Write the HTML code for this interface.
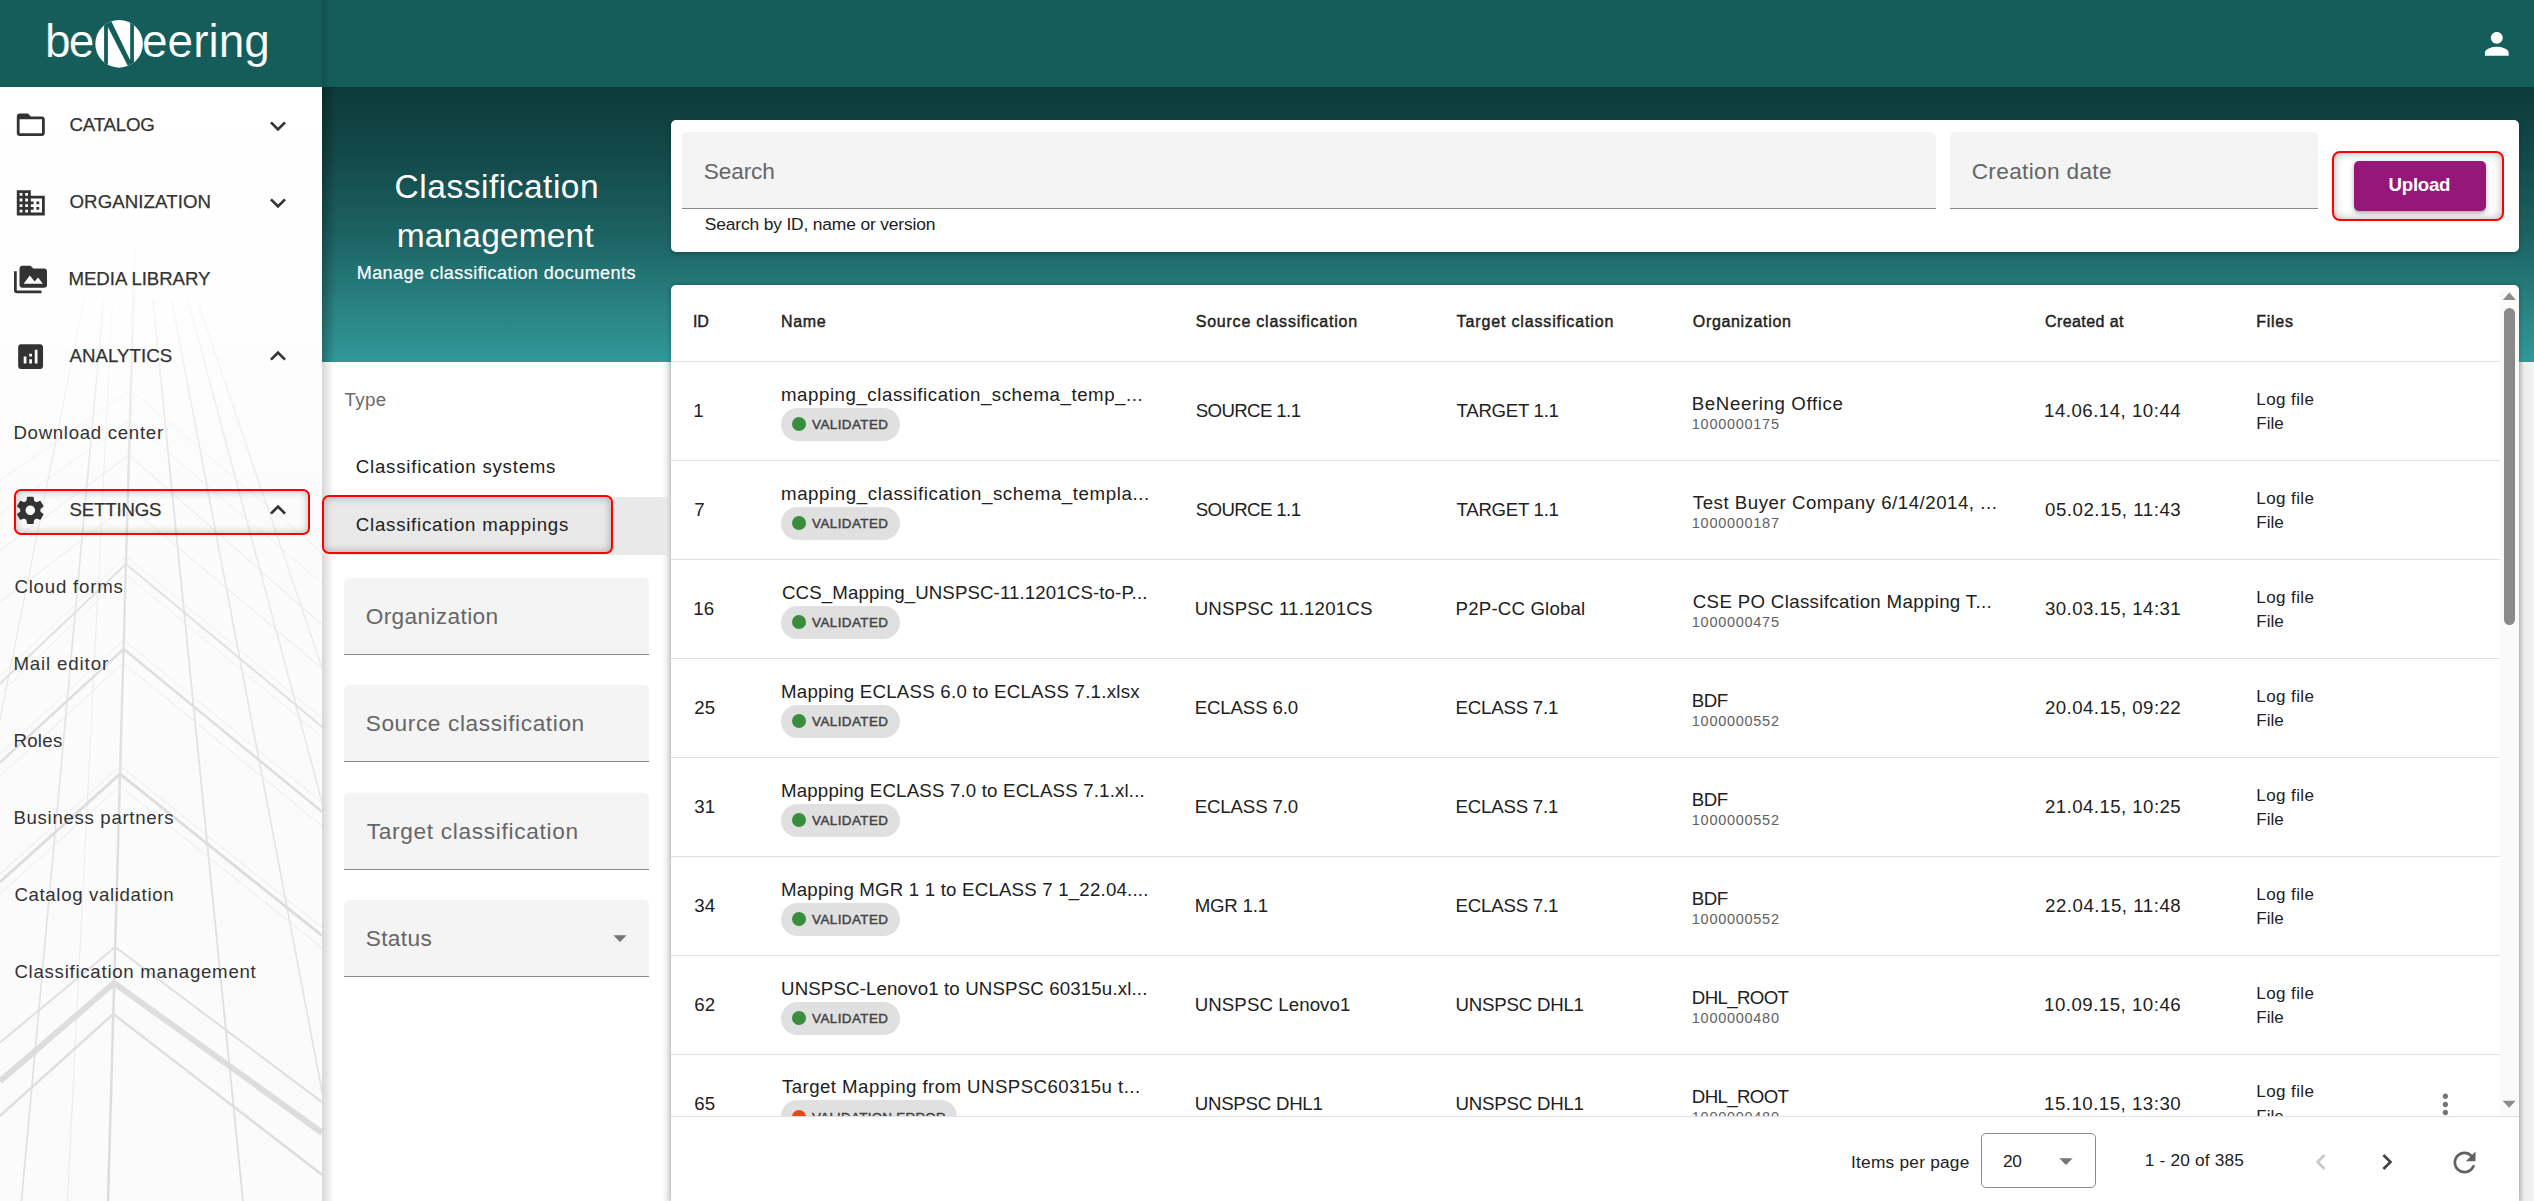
<!DOCTYPE html>
<html><head><meta charset="utf-8">
<style>
*{margin:0;padding:0;box-sizing:border-box}
html,body{width:2534px;height:1201px;overflow:hidden;background:#f3f3f3;font-family:"Liberation Sans",sans-serif}
.a{position:absolute}
.t{position:absolute;white-space:pre;font-family:"Liberation Sans",sans-serif}
svg.i{position:absolute;overflow:visible}
</style></head><body>
<!-- right gray strip shadow -->
<div class="a" style="left:2519px;top:362px;width:15px;height:839px;background:linear-gradient(90deg,#d4d4d4 0,#ececec 5px,#f4f4f4 15px)"></div>
<!-- header band -->
<div class="a" style="left:322px;top:87px;width:2212px;height:275px;background:linear-gradient(180deg,#0d3a3a 0%,#13494a 25%,#1d6465 55%,#2a8282 80%,#31999a 100%)"></div>
<div class="a" style="left:322px;top:87px;width:14px;height:275px;background:linear-gradient(90deg,rgba(0,0,0,.28),rgba(0,0,0,0))"></div>
<!-- top bar -->
<div class="a" style="left:0;top:0;width:2534px;height:87px;background:#145d5b"></div>
<div class="a" style="left:322px;top:0;width:8px;height:87px;background:linear-gradient(90deg,rgba(0,0,0,.12),rgba(0,0,0,0))"></div>
<!-- filter panel -->
<div class="a" style="left:322px;top:362px;width:349px;height:839px;background:#ffffff"></div>
<div class="a" style="left:322px;top:362px;width:12px;height:839px;background:linear-gradient(90deg,rgba(0,0,0,.16),rgba(0,0,0,0))"></div>
<div class="a" style="left:661px;top:362px;width:10px;height:839px;background:linear-gradient(270deg,rgba(0,0,0,.10),rgba(0,0,0,0))"></div>
<!-- selected type row -->
<div class="a" style="left:322px;top:497px;width:349px;height:58px;background:#e9e9e9"></div>
<!-- filter fields -->
<div class="a" style="left:344px;top:577.90px;width:305.2px;height:77px;background:#f4f4f4;border-radius:5px 5px 0 0;border-bottom:1.4px solid #8a8a8a"></div>
<div class="a" style="left:344px;top:685.35px;width:305.2px;height:77px;background:#f4f4f4;border-radius:5px 5px 0 0;border-bottom:1.4px solid #8a8a8a"></div>
<div class="a" style="left:344px;top:792.80px;width:305.2px;height:77px;background:#f4f4f4;border-radius:5px 5px 0 0;border-bottom:1.4px solid #8a8a8a"></div>
<div class="a" style="left:344px;top:900.25px;width:305.2px;height:77px;background:#f4f4f4;border-radius:5px 5px 0 0;border-bottom:1.4px solid #8a8a8a"></div>
<!-- sidebar -->
<div class="a" style="left:0;top:87px;width:322px;height:1114px;background:#ffffff;overflow:hidden">
<svg class="a" style="left:0;top:0" width="322" height="1114" viewBox="0 87 322 1114">
<defs><linearGradient id="fade" x1="0" y1="0" x2="0" y2="1"><stop offset="0" stop-color="#fff" stop-opacity="1"/><stop offset="0.17" stop-color="#fff" stop-opacity="0.85"/><stop offset="0.35" stop-color="#fff" stop-opacity="0.2"/><stop offset="1" stop-color="#fff" stop-opacity="0"/></linearGradient></defs>
<rect x="0" y="87" width="322" height="1114" fill="#fbfbfb"/>
<g fill="none">
<path d="M134.8 250 L108 1201" stroke-width="2.5" stroke="#dcdcdc"/>
<path d="M152.9 300.0 L243.0 1201.0" stroke-width="1.8" stroke="#dedede"/>
<path d="M171.6 300.0 L342.8 1201.0" stroke-width="1.5" stroke="#e0e0e0"/>
<path d="M187.9 300.0 L428.5 1201.0" stroke-width="1.4" stroke="#e2e2e2"/>
<path d="M197.0 300.0 L503.4 1201.0" stroke-width="1.2" stroke="#e4e4e4"/>
<path d="M103.8 300.0 L21.4 1201.0" stroke-width="1.6" stroke="#e0e0e0"/>
<path d="M84.0 300.0 L-96.2 1201.0" stroke-width="1.2" stroke="#e4e4e4"/>
<path d="M112.5 300.0 L67.4 1201.0" stroke-width="0.9" stroke="#e8e8e8"/>
<path d="M0 480.3 L130.9 390.0 L322 552.5" stroke-width="0.8" stroke="#e8e8e8"/>
<path d="M0 513.6 L130.0 420.0 L322 583.2" stroke-width="0.8" stroke="#e8e8e8"/>
<path d="M0 550.5 L129.0 455.0 L322 624.8" stroke-width="1.0" stroke="#e4e4e4"/>
<path d="M0 602.0 L127.6 505.0 L322 668.3" stroke-width="1.0" stroke="#e6e6e6"/>
<path d="M0 675.9 L126.2 556.0 L322 718.5" stroke-width="0.8" stroke="#e8e8e8"/>
<path d="M0 683.7 L126.0 564.0 L322 726.7" stroke-width="2.0" stroke="#dcdcdc"/>
<path d="M0 693.4 L125.7 574.0 L322 737.0" stroke-width="0.8" stroke="#e8e8e8"/>
<path d="M0 753.9 L123.8 640.0 L322 802.5" stroke-width="0.8" stroke="#e8e8e8"/>
<path d="M0 762.7 L123.6 649.0 L322 811.7" stroke-width="2.5" stroke="#dadada"/>
<path d="M0 776.3 L123.2 663.0 L322 826.0" stroke-width="0.9" stroke="#e6e6e6"/>
<path d="M0 874.2 L120.3 766.0 L322 927.4" stroke-width="0.9" stroke="#e6e6e6"/>
<path d="M0 882.0 L120.0 774.0 L322 935.6" stroke-width="3.0" stroke="#dadada"/>
<path d="M0 893.7 L119.7 786.0 L322 947.8" stroke-width="0.9" stroke="#e6e6e6"/>
<path d="M0 1042.6 L115.2 947.0 L322 1102.1" stroke-width="2.0" stroke="#dedede"/>
<path d="M0 1081.2 L114.1 983.0 L322 1132.7" stroke-width="6.0" stroke="#dcdcdc"/>
<path d="M0 1115.9 L113.3 1014.0 L322 1174.7" stroke-width="2.5" stroke="#dedede"/>
</g>
<rect x="0" y="87" width="322" height="1114" fill="url(#fade)"/>
</svg>
</div>
<!-- search card -->
<div class="a" style="left:671px;top:120px;width:1848px;height:132px;background:#fff;border-radius:5px;box-shadow:0 2px 4px rgba(0,0,0,.25)"></div>
<div class="a" style="left:682px;top:132px;width:1254px;height:77px;background:#f4f4f4;border-radius:5px 5px 0 0;border-bottom:1.4px solid #8a8a8a"></div>
<div class="a" style="left:1950px;top:132px;width:368px;height:77px;background:#f4f4f4;border-radius:5px 5px 0 0;border-bottom:1.4px solid #8a8a8a"></div>
<div class="a" style="left:2332px;top:151px;width:172px;height:70px;border:2px solid #f00;border-radius:8px;box-shadow:inset 0 0 10px rgba(0,0,0,.3)"></div>
<div class="a" style="left:2354px;top:161px;width:132px;height:50px;background:#96177a;border-radius:5px;box-shadow:0 2px 4px rgba(0,0,0,.35)"></div>
<!-- table card -->
<div class="a" style="left:671px;top:285px;width:1848px;height:916px;background:#fff;border-radius:5px 5px 0 0;box-shadow:0 0 5px rgba(0,0,0,.3)"></div>
<div class="a" style="left:2500px;top:290px;width:19px;height:826px;background:#fafafa"></div>
<div class="a" style="left:671px;top:361px;width:1829px;height:1.3px;background:#e0e0e0"></div>
<div class="a" style="left:671px;top:459.95px;width:1829px;height:1px;background:#e0e0e0"></div>
<div class="a" style="left:671px;top:558.90px;width:1829px;height:1px;background:#e0e0e0"></div>
<div class="a" style="left:671px;top:657.85px;width:1829px;height:1px;background:#e0e0e0"></div>
<div class="a" style="left:671px;top:756.80px;width:1829px;height:1px;background:#e0e0e0"></div>
<div class="a" style="left:671px;top:855.75px;width:1829px;height:1px;background:#e0e0e0"></div>
<div class="a" style="left:671px;top:954.70px;width:1829px;height:1px;background:#e0e0e0"></div>
<div class="a" style="left:671px;top:1053.65px;width:1829px;height:1px;background:#e0e0e0"></div>
<div class="a" style="left:671px;top:1115.6px;width:1848px;height:1.3px;background:#e0e0e0"></div>
<div class="a" style="left:0;top:0;width:2534px;height:1116px;overflow:hidden"><div class="a" style="left:781.2px;top:407.80px;width:118.5px;height:33px;border-radius:16.5px;background:#e0e0e0"></div>
<div class="a" style="left:791.8px;top:417.20px;width:14.2px;height:14.2px;border-radius:50%;background:#388e3c"></div>
<div class="a" style="left:781.2px;top:506.75px;width:118.5px;height:33px;border-radius:16.5px;background:#e0e0e0"></div>
<div class="a" style="left:791.8px;top:516.15px;width:14.2px;height:14.2px;border-radius:50%;background:#388e3c"></div>
<div class="a" style="left:781.2px;top:605.70px;width:118.5px;height:33px;border-radius:16.5px;background:#e0e0e0"></div>
<div class="a" style="left:791.8px;top:615.10px;width:14.2px;height:14.2px;border-radius:50%;background:#388e3c"></div>
<div class="a" style="left:781.2px;top:704.65px;width:118.5px;height:33px;border-radius:16.5px;background:#e0e0e0"></div>
<div class="a" style="left:791.8px;top:714.05px;width:14.2px;height:14.2px;border-radius:50%;background:#388e3c"></div>
<div class="a" style="left:781.2px;top:803.60px;width:118.5px;height:33px;border-radius:16.5px;background:#e0e0e0"></div>
<div class="a" style="left:791.8px;top:813.00px;width:14.2px;height:14.2px;border-radius:50%;background:#388e3c"></div>
<div class="a" style="left:781.2px;top:902.55px;width:118.5px;height:33px;border-radius:16.5px;background:#e0e0e0"></div>
<div class="a" style="left:791.8px;top:911.95px;width:14.2px;height:14.2px;border-radius:50%;background:#388e3c"></div>
<div class="a" style="left:781.2px;top:1001.50px;width:118.5px;height:33px;border-radius:16.5px;background:#e0e0e0"></div>
<div class="a" style="left:791.8px;top:1010.90px;width:14.2px;height:14.2px;border-radius:50%;background:#388e3c"></div>
<div class="a" style="left:781.2px;top:1100.45px;width:175.5px;height:33px;border-radius:16.5px;background:#e0e0e0"></div>
<div class="a" style="left:791.8px;top:1109.85px;width:14.2px;height:14.2px;border-radius:50%;background:#e64a19"></div></div>
<!-- scrollbar -->
<svg class="i" style="left:2500px;top:285px" width="19" height="831" viewBox="0 0 19 831">
 <path d="M2.8 15 L9.35 7.6 L15.9 15 Z" fill="#8c8c8c"/>
 <rect x="4" y="23" width="11" height="317" rx="5.5" fill="#8a8a8a"/>
 <path d="M2.6 815.7 L15.7 815.7 L9.15 822.8 Z" fill="#8c8c8c"/>
</svg>
<!-- footer select -->
<div class="a" style="left:1980.5px;top:1133.4px;width:115.2px;height:55px;border:1.3px solid #8a8a8a;border-radius:5px"></div>
<svg class="i" style="left:2050.4px;top:1145.3px" width="32" height="32" viewBox="0 0 24 24"><path d="M7 10l5 5 5-5z" fill="#757575"/></svg>
<svg class="i" style="left:2305.3px;top:1146px" width="32" height="32" viewBox="0 0 24 24"><path d="M15.41 7.41L14 6l-6 6 6 6 1.41-1.41L10.83 12z" fill="#c8c8c8"/></svg>
<svg class="i" style="left:2371.4px;top:1146px" width="32" height="32" viewBox="0 0 24 24"><path d="M10 6L8.59 7.41 13.17 12l-4.58 4.59L10 18l6-6z" fill="#424242"/></svg>
<svg class="i" style="left:2447.5px;top:1145.7px" width="33" height="33" viewBox="0 0 24 24"><path d="M17.65 6.35C16.2 4.9 14.21 4 12 4c-4.42 0-7.99 3.58-7.99 8s3.57 8 7.99 8c3.73 0 6.84-2.55 7.73-6h-2.08c-.82 2.33-3.04 4-5.65 4-3.31 0-6-2.69-6-6s2.69-6 6-6c1.66 0 3.14.69 4.22 1.78L13 11h7V4l-2.35 2.35z" fill="#616161"/></svg>
<!-- kebab clipped -->
<div class="a" style="left:2420px;top:1080px;width:50px;height:36px;overflow:hidden">
<svg class="i" style="left:8.8px;top:8.1px" width="32.8" height="32.8" viewBox="0 0 24 24"><path d="M12 8c1.1 0 2-.9 2-2s-.9-2-2-2-2 .9-2 2 .9 2 2 2zm0 2c-1.1 0-2 .9-2 2s.9 2 2 2 2-.9 2-2-.9-2-2-2zm0 6c-1.1 0-2 .9-2 2s.9 2 2 2 2-.9 2-2-.9-2-2-2z" fill="#757575"/></svg>
</div>
<!-- sidebar red box -->
<div class="a" style="left:14px;top:489px;width:296px;height:46px;border:2px solid #f00;border-radius:7px;box-shadow:inset 0 0 9px rgba(0,0,0,.28)"></div>
<!-- filter red box -->
<div class="a" style="left:322px;top:495px;width:291px;height:58.5px;border:2px solid #f00;border-radius:7px;box-shadow:inset 0 0 9px rgba(0,0,0,.3)"></div>
<!-- sidebar icons -->
<svg class="i" style="left:14.20px;top:108.40px" width="33.60" height="33.60" viewBox="0 0 24 24"><path d="M20 6h-8l-2-2H4c-1.1 0-1.99.9-1.99 2L2 18c0 1.1.9 2 2 2h16c1.1 0 2-.9 2-2V8c0-1.1-.9-2-2-2zm0 12H4V8h16v10z" fill="#333333"/></svg>
<svg class="i" style="left:14.20px;top:186.10px" width="33.60" height="33.60" viewBox="0 0 24 24"><path d="M12 7V3H2v18h20V7H12zM6 19H4v-2h2v2zm0-4H4v-2h2v2zm0-4H4V9h2v2zm0-4H4V5h2v2zm4 12H8v-2h2v2zm0-4H8v-2h2v2zm0-4H8V9h2v2zm0-4H8V5h2v2zm10 12h-8v-2h2v-2h-2v-2h2v-2h-2V9h8v10zm-2-8h-2v2h2v-2zm0 4h-2v2h2v-2z" fill="#333333"/></svg>
<svg class="i" style="left:14.00px;top:263.00px" width="33.00" height="33.00" viewBox="0 0 24 24"><path d="M2 6H0v5h.01L0 20c0 1.1.9 2 2 2h18v-2H2V6zm20-2h-8l-2-2H6c-1.1 0-1.99.9-1.99 2L4 16c0 1.1.9 2 2 2h16c1.1 0 2-.9 2-2V6c0-1.1-.9-2-2-2zM7 15l4.5-6 3.5 4.51 2.5-3.01L21 15H7z" fill="#333333"/></svg>
<svg class="i" style="left:13.85px;top:339.85px" width="33.20" height="33.20" viewBox="0 0 24 24"><path d="M19 3H5c-1.1 0-2 .9-2 2v14c0 1.1.9 2 2 2h14c1.1 0 2-.9 2-2V5c0-1.1-.9-2-2-2zM9 17H7v-5h2v5zm4 0h-2v-3h2v3zm0-5h-2v-2h2v2zm4 5h-2V7h2v10z" fill="#333333"/></svg>
<svg class="i" style="left:14.00px;top:494.30px" width="32.60" height="32.60" viewBox="0 0 24 24"><path d="M19.43 12.98c.04-.32.07-.64.07-.98s-.03-.66-.07-.98l2.11-1.65c.19-.15.24-.42.12-.64l-2-3.46c-.12-.22-.39-.3-.61-.22l-2.49 1c-.52-.4-1.08-.73-1.69-.98l-.38-2.65C14.46 2.180 14.25 2 14 2h-4c-.25 0-.46.18-.49.42l-.38 2.65c-.61.25-1.170.59-1.69.98l-2.49-1c-.23-.09-.49 0-.61.22l-2 3.46c-.13.22-.07.49.12.64l2.11 1.65c-.04.32-.07.65-.07.98s.03.66.07.98l-2.11 1.65c-.19.15-.24.42-.12.64l2 3.46c.12.22.39.3.61.22l2.49-1c.52.4 1.08.73 1.69.98l.38 2.65c.03.24.24.42.49.42h4c.25 0 .46-.18.49-.42l.38-2.65c.61-.25 1.17-.59 1.69-.98l2.49 1c.23.09.49 0 .61-.22l2-3.46c.12-.22.07-.49-.12-.64l-2.11-1.65zM12 15.5c-1.93 0-3.5-1.57-3.5-3.5s1.57-3.5 3.5-3.5 3.5 1.57 3.5 3.5-1.57 3.5-3.5 3.5z" fill="#333333"/></svg>
<svg class="i" style="left:262.30px;top:109.50px" width="32.00" height="32.00" viewBox="0 0 24 24"><path d="M16.59 8.59L12 13.17 7.41 8.59 6 10l6 6 6-6z" fill="#333333"/></svg>
<svg class="i" style="left:262.30px;top:186.50px" width="32.00" height="32.00" viewBox="0 0 24 24"><path d="M16.59 8.59L12 13.17 7.41 8.59 6 10l6 6 6-6z" fill="#333333"/></svg>
<svg class="i" style="left:262.30px;top:340.30px" width="32.00" height="32.00" viewBox="0 0 24 24"><path d="M12 8l-6 6 1.41 1.41L12 10.83l4.59 4.58L18 14z" fill="#333333"/></svg>
<svg class="i" style="left:262.30px;top:494.30px" width="32.00" height="32.00" viewBox="0 0 24 24"><path d="M12 8l-6 6 1.41 1.41L12 10.83l4.59 4.58L18 14z" fill="#333333"/></svg>
<!-- logo -->
<svg class="i" style="left:0;top:0" width="322" height="87" viewBox="0 0 322 87">
<g font-family="Liberation Sans" font-size="46" fill="#fff" stroke="#145d5b" stroke-width="0.2">
<text x="45.1" y="56.7" letter-spacing="-1.9">be</text>
<text x="142" y="56.7" letter-spacing="0">eering</text>
</g>
<defs><clipPath id="cc"><circle cx="119.1" cy="43.85" r="23.8"/></clipPath></defs><circle cx="119.1" cy="43.85" r="23.8" fill="#fff"/>
<path clip-path="url(#cc)" d="M104.1 15 H107.9 V72 H104.1 Z M130.2 15 H133.9 V72 H130.2 Z M107.9 15 L108.3 15 L130.2 60.3 L130.2 72 L131 72 L107.9 26.9 Z" fill="#145d5b"/>
</svg>
<!-- user icon -->
<svg class="i" style="left:2479.4px;top:25.6px" width="35.6" height="35.6" viewBox="0 0 24 24"><path d="M12 12c2.21 0 4-1.79 4-4s-1.79-4-4-4-4 1.79-4 4 1.79 4 4 4zm0 2c-2.67 0-8 1.34-8 4v2h16v-2c0-2.66-5.33-4-8-4z" fill="#fff"/></svg>
<!-- status dropdown arrow -->
<svg class="i" style="left:604px;top:922.3px" width="32" height="32" viewBox="0 0 24 24"><path d="M7 10l5 5 5-5z" fill="#757575"/></svg>
<!-- texts -->
<div class="a" style="left:0;top:0;width:2534px;height:1116px;overflow:hidden">
<div class="t" style="left:693.30px;top:401.90px;font-size:18.67px;line-height:18.67px;color:#212121">1</div>
<div class="t" style="left:781.00px;top:385.80px;font-size:18.67px;line-height:18.67px;color:#212121;letter-spacing:0.554px">mapping_classification_schema_temp_...</div>
<div class="t" style="left:1195.70px;top:401.90px;font-size:18.67px;line-height:18.67px;color:#212121;letter-spacing:-0.618px">SOURCE 1.1</div>
<div class="t" style="left:1456.60px;top:401.90px;font-size:18.67px;line-height:18.67px;color:#212121;letter-spacing:-0.302px">TARGET 1.1</div>
<div class="t" style="left:1691.80px;top:394.90px;font-size:18.67px;line-height:18.67px;color:#212121;letter-spacing:0.617px">BeNeering Office</div>
<div class="t" style="left:1691.80px;top:417.33px;font-size:14.50px;line-height:14.50px;color:#616161;letter-spacing:0.725px">1000000175</div>
<div class="t" style="left:2044.00px;top:402.10px;font-size:18.67px;line-height:18.67px;color:#212121;letter-spacing:0.500px">14.06.14, 10:44</div>
<div class="t" style="left:2256.30px;top:390.81px;font-size:17.00px;line-height:17.00px;color:#212121;letter-spacing:0.405px">Log file</div>
<div class="t" style="left:2256.30px;top:415.21px;font-size:17.00px;line-height:17.00px;color:#212121;letter-spacing:-0.013px">File</div>
<div class="t" style="left:812.00px;top:418.36px;font-size:13.40px;line-height:13.40px;color:#424242;letter-spacing:0.443px;-webkit-text-stroke:0.45px #424242">VALIDATED</div>
<div class="t" style="left:694.30px;top:500.85px;font-size:18.67px;line-height:18.67px;color:#212121">7</div>
<div class="t" style="left:781.00px;top:484.75px;font-size:18.67px;line-height:18.67px;color:#212121;letter-spacing:0.602px">mapping_classification_schema_templa...</div>
<div class="t" style="left:1195.70px;top:500.85px;font-size:18.67px;line-height:18.67px;color:#212121;letter-spacing:-0.618px">SOURCE 1.1</div>
<div class="t" style="left:1456.60px;top:500.85px;font-size:18.67px;line-height:18.67px;color:#212121;letter-spacing:-0.302px">TARGET 1.1</div>
<div class="t" style="left:1692.80px;top:493.85px;font-size:18.67px;line-height:18.67px;color:#212121;letter-spacing:0.526px">Test Buyer Company 6/14/2014, ...</div>
<div class="t" style="left:1691.80px;top:516.28px;font-size:14.50px;line-height:14.50px;color:#616161;letter-spacing:0.725px">1000000187</div>
<div class="t" style="left:2045.00px;top:501.05px;font-size:18.67px;line-height:18.67px;color:#212121;letter-spacing:0.528px">05.02.15, 11:43</div>
<div class="t" style="left:2256.30px;top:489.76px;font-size:17.00px;line-height:17.00px;color:#212121;letter-spacing:0.405px">Log file</div>
<div class="t" style="left:2256.30px;top:514.16px;font-size:17.00px;line-height:17.00px;color:#212121;letter-spacing:-0.013px">File</div>
<div class="t" style="left:812.00px;top:517.31px;font-size:13.40px;line-height:13.40px;color:#424242;letter-spacing:0.443px;-webkit-text-stroke:0.45px #424242">VALIDATED</div>
<div class="t" style="left:693.30px;top:599.80px;font-size:18.67px;line-height:18.67px;color:#212121">16</div>
<div class="t" style="left:782.00px;top:583.70px;font-size:18.67px;line-height:18.67px;color:#212121;letter-spacing:0.119px">CCS_Mapping_UNSPSC-11.1201CS-to-P...</div>
<div class="t" style="left:1194.70px;top:599.80px;font-size:18.67px;line-height:18.67px;color:#212121;letter-spacing:0.189px">UNSPSC 11.1201CS</div>
<div class="t" style="left:1455.60px;top:599.80px;font-size:18.67px;line-height:18.67px;color:#212121;letter-spacing:0.176px">P2P-CC Global</div>
<div class="t" style="left:1692.80px;top:592.80px;font-size:18.67px;line-height:18.67px;color:#212121;letter-spacing:0.342px">CSE PO Classifcation Mapping T...</div>
<div class="t" style="left:1691.80px;top:615.23px;font-size:14.50px;line-height:14.50px;color:#616161;letter-spacing:0.725px">1000000475</div>
<div class="t" style="left:2045.00px;top:600.00px;font-size:18.67px;line-height:18.67px;color:#212121;letter-spacing:0.429px">30.03.15, 14:31</div>
<div class="t" style="left:2256.30px;top:588.71px;font-size:17.00px;line-height:17.00px;color:#212121;letter-spacing:0.405px">Log file</div>
<div class="t" style="left:2256.30px;top:613.11px;font-size:17.00px;line-height:17.00px;color:#212121;letter-spacing:-0.013px">File</div>
<div class="t" style="left:812.00px;top:616.26px;font-size:13.40px;line-height:13.40px;color:#424242;letter-spacing:0.443px;-webkit-text-stroke:0.45px #424242">VALIDATED</div>
<div class="t" style="left:694.30px;top:698.75px;font-size:18.67px;line-height:18.67px;color:#212121">25</div>
<div class="t" style="left:781.00px;top:682.65px;font-size:18.67px;line-height:18.67px;color:#212121;letter-spacing:0.252px">Mapping ECLASS 6.0 to ECLASS 7.1.xlsx</div>
<div class="t" style="left:1194.70px;top:698.75px;font-size:18.67px;line-height:18.67px;color:#212121;letter-spacing:-0.141px">ECLASS 6.0</div>
<div class="t" style="left:1455.60px;top:698.75px;font-size:18.67px;line-height:18.67px;color:#212121;letter-spacing:-0.229px">ECLASS 7.1</div>
<div class="t" style="left:1691.80px;top:691.75px;font-size:18.67px;line-height:18.67px;color:#212121;letter-spacing:-0.458px">BDF</div>
<div class="t" style="left:1691.80px;top:714.18px;font-size:14.50px;line-height:14.50px;color:#616161;letter-spacing:0.725px">1000000552</div>
<div class="t" style="left:2045.00px;top:698.95px;font-size:18.67px;line-height:18.67px;color:#212121;letter-spacing:0.429px">20.04.15, 09:22</div>
<div class="t" style="left:2256.30px;top:687.66px;font-size:17.00px;line-height:17.00px;color:#212121;letter-spacing:0.405px">Log file</div>
<div class="t" style="left:2256.30px;top:712.06px;font-size:17.00px;line-height:17.00px;color:#212121;letter-spacing:-0.013px">File</div>
<div class="t" style="left:812.00px;top:715.21px;font-size:13.40px;line-height:13.40px;color:#424242;letter-spacing:0.443px;-webkit-text-stroke:0.45px #424242">VALIDATED</div>
<div class="t" style="left:694.30px;top:797.70px;font-size:18.67px;line-height:18.67px;color:#212121">31</div>
<div class="t" style="left:781.00px;top:781.60px;font-size:18.67px;line-height:18.67px;color:#212121;letter-spacing:0.185px">Mappping ECLASS 7.0 to ECLASS 7.1.xl...</div>
<div class="t" style="left:1194.70px;top:797.70px;font-size:18.67px;line-height:18.67px;color:#212121;letter-spacing:-0.141px">ECLASS 7.0</div>
<div class="t" style="left:1455.60px;top:797.70px;font-size:18.67px;line-height:18.67px;color:#212121;letter-spacing:-0.229px">ECLASS 7.1</div>
<div class="t" style="left:1691.80px;top:790.70px;font-size:18.67px;line-height:18.67px;color:#212121;letter-spacing:-0.458px">BDF</div>
<div class="t" style="left:1691.80px;top:813.13px;font-size:14.50px;line-height:14.50px;color:#616161;letter-spacing:0.725px">1000000552</div>
<div class="t" style="left:2045.00px;top:797.90px;font-size:18.67px;line-height:18.67px;color:#212121;letter-spacing:0.429px">21.04.15, 10:25</div>
<div class="t" style="left:2256.30px;top:786.61px;font-size:17.00px;line-height:17.00px;color:#212121;letter-spacing:0.405px">Log file</div>
<div class="t" style="left:2256.30px;top:811.01px;font-size:17.00px;line-height:17.00px;color:#212121;letter-spacing:-0.013px">File</div>
<div class="t" style="left:812.00px;top:814.16px;font-size:13.40px;line-height:13.40px;color:#424242;letter-spacing:0.443px;-webkit-text-stroke:0.45px #424242">VALIDATED</div>
<div class="t" style="left:694.30px;top:896.65px;font-size:18.67px;line-height:18.67px;color:#212121">34</div>
<div class="t" style="left:781.00px;top:880.55px;font-size:18.67px;line-height:18.67px;color:#212121;letter-spacing:0.198px">Mapping MGR 1 1 to ECLASS 7 1_22.04....</div>
<div class="t" style="left:1194.70px;top:896.65px;font-size:18.67px;line-height:18.67px;color:#212121;letter-spacing:-0.195px">MGR 1.1</div>
<div class="t" style="left:1455.60px;top:896.65px;font-size:18.67px;line-height:18.67px;color:#212121;letter-spacing:-0.229px">ECLASS 7.1</div>
<div class="t" style="left:1691.80px;top:889.65px;font-size:18.67px;line-height:18.67px;color:#212121;letter-spacing:-0.458px">BDF</div>
<div class="t" style="left:1691.80px;top:912.08px;font-size:14.50px;line-height:14.50px;color:#616161;letter-spacing:0.725px">1000000552</div>
<div class="t" style="left:2045.00px;top:896.85px;font-size:18.67px;line-height:18.67px;color:#212121;letter-spacing:0.528px">22.04.15, 11:48</div>
<div class="t" style="left:2256.30px;top:885.56px;font-size:17.00px;line-height:17.00px;color:#212121;letter-spacing:0.405px">Log file</div>
<div class="t" style="left:2256.30px;top:909.96px;font-size:17.00px;line-height:17.00px;color:#212121;letter-spacing:-0.013px">File</div>
<div class="t" style="left:812.00px;top:913.11px;font-size:13.40px;line-height:13.40px;color:#424242;letter-spacing:0.443px;-webkit-text-stroke:0.45px #424242">VALIDATED</div>
<div class="t" style="left:694.30px;top:995.60px;font-size:18.67px;line-height:18.67px;color:#212121">62</div>
<div class="t" style="left:781.00px;top:979.50px;font-size:18.67px;line-height:18.67px;color:#212121;letter-spacing:0.153px">UNSPSC-Lenovo1 to UNSPSC 60315u.xl...</div>
<div class="t" style="left:1194.70px;top:995.60px;font-size:18.67px;line-height:18.67px;color:#212121;letter-spacing:0.089px">UNSPSC Lenovo1</div>
<div class="t" style="left:1455.60px;top:995.60px;font-size:18.67px;line-height:18.67px;color:#212121;letter-spacing:-0.225px">UNSPSC DHL1</div>
<div class="t" style="left:1691.80px;top:988.60px;font-size:18.67px;line-height:18.67px;color:#212121;letter-spacing:-0.628px">DHL_ROOT</div>
<div class="t" style="left:1691.80px;top:1011.03px;font-size:14.50px;line-height:14.50px;color:#616161;letter-spacing:0.725px">1000000480</div>
<div class="t" style="left:2044.00px;top:995.80px;font-size:18.67px;line-height:18.67px;color:#212121;letter-spacing:0.500px">10.09.15, 10:46</div>
<div class="t" style="left:2256.30px;top:984.51px;font-size:17.00px;line-height:17.00px;color:#212121;letter-spacing:0.405px">Log file</div>
<div class="t" style="left:2256.30px;top:1008.91px;font-size:17.00px;line-height:17.00px;color:#212121;letter-spacing:-0.013px">File</div>
<div class="t" style="left:812.00px;top:1012.06px;font-size:13.40px;line-height:13.40px;color:#424242;letter-spacing:0.443px;-webkit-text-stroke:0.45px #424242">VALIDATED</div>
<div class="t" style="left:694.30px;top:1094.55px;font-size:18.67px;line-height:18.67px;color:#212121">65</div>
<div class="t" style="left:782.00px;top:1078.45px;font-size:18.67px;line-height:18.67px;color:#212121;letter-spacing:0.441px">Target Mapping from UNSPSC60315u t...</div>
<div class="t" style="left:1194.70px;top:1094.55px;font-size:18.67px;line-height:18.67px;color:#212121;letter-spacing:-0.245px">UNSPSC DHL1</div>
<div class="t" style="left:1455.60px;top:1094.55px;font-size:18.67px;line-height:18.67px;color:#212121;letter-spacing:-0.225px">UNSPSC DHL1</div>
<div class="t" style="left:1691.80px;top:1087.55px;font-size:18.67px;line-height:18.67px;color:#212121;letter-spacing:-0.628px">DHL_ROOT</div>
<div class="t" style="left:1691.80px;top:1109.98px;font-size:14.50px;line-height:14.50px;color:#616161;letter-spacing:0.725px">1000000480</div>
<div class="t" style="left:2044.00px;top:1094.75px;font-size:18.67px;line-height:18.67px;color:#212121;letter-spacing:0.500px">15.10.15, 13:30</div>
<div class="t" style="left:2256.30px;top:1083.46px;font-size:17.00px;line-height:17.00px;color:#212121;letter-spacing:0.405px">Log file</div>
<div class="t" style="left:2256.30px;top:1107.86px;font-size:17.00px;line-height:17.00px;color:#212121;letter-spacing:-0.013px">File</div>
<div class="t" style="left:812.00px;top:1111.01px;font-size:13.40px;line-height:13.40px;color:#424242;letter-spacing:0.264px;-webkit-text-stroke:0.45px #424242">VALIDATION ERROR</div>
</div>
<div class="t" style="left:394.60px;top:169.54px;font-size:33.50px;line-height:33.50px;color:#ffffff;letter-spacing:0.514px">Classification</div>
<div class="t" style="left:396.70px;top:218.74px;font-size:33.50px;line-height:33.50px;color:#ffffff;letter-spacing:0.163px">management</div>
<div class="t" style="left:356.70px;top:264.06px;font-size:18.00px;line-height:18.00px;color:#ffffff;letter-spacing:0.455px;-webkit-text-stroke:0.2px #ffffff">Manage classification documents</div>
<div class="t" style="left:69.50px;top:116.30px;font-size:18.67px;line-height:18.67px;color:#333333;letter-spacing:-0.179px;-webkit-text-stroke:0.25px #333333">CATALOG</div>
<div class="t" style="left:69.50px;top:193.30px;font-size:18.67px;line-height:18.67px;color:#333333;letter-spacing:0.087px;-webkit-text-stroke:0.25px #333333">ORGANIZATION</div>
<div class="t" style="left:68.50px;top:270.30px;font-size:18.67px;line-height:18.67px;color:#333333;letter-spacing:-0.060px;-webkit-text-stroke:0.25px #333333">MEDIA LIBRARY</div>
<div class="t" style="left:69.50px;top:347.30px;font-size:18.67px;line-height:18.67px;color:#333333;letter-spacing:0.044px;-webkit-text-stroke:0.25px #333333">ANALYTICS</div>
<div class="t" style="left:13.40px;top:423.80px;font-size:18.67px;line-height:18.67px;color:#333333;letter-spacing:0.693px">Download center</div>
<div class="t" style="left:69.50px;top:501.30px;font-size:18.67px;line-height:18.67px;color:#333333;letter-spacing:-0.192px;-webkit-text-stroke:0.25px #333333">SETTINGS</div>
<div class="t" style="left:14.40px;top:577.80px;font-size:18.67px;line-height:18.67px;color:#333333;letter-spacing:0.796px">Cloud forms</div>
<div class="t" style="left:13.40px;top:654.80px;font-size:18.67px;line-height:18.67px;color:#333333;letter-spacing:0.866px">Mail editor</div>
<div class="t" style="left:13.40px;top:731.80px;font-size:18.67px;line-height:18.67px;color:#333333;letter-spacing:0.308px">Roles</div>
<div class="t" style="left:13.40px;top:808.80px;font-size:18.67px;line-height:18.67px;color:#333333;letter-spacing:0.675px">Business partners</div>
<div class="t" style="left:14.40px;top:885.80px;font-size:18.67px;line-height:18.67px;color:#333333;letter-spacing:0.639px">Catalog validation</div>
<div class="t" style="left:14.40px;top:962.80px;font-size:18.67px;line-height:18.67px;color:#333333;letter-spacing:0.725px">Classification management</div>
<div class="t" style="left:344.60px;top:390.80px;font-size:18.67px;line-height:18.67px;color:#6b6b6b;letter-spacing:0.377px">Type</div>
<div class="t" style="left:355.80px;top:458.30px;font-size:18.67px;line-height:18.67px;color:#212121;letter-spacing:0.768px">Classification systems</div>
<div class="t" style="left:355.80px;top:515.70px;font-size:18.67px;line-height:18.67px;color:#212121;letter-spacing:0.752px">Classification mappings</div>
<div class="t" style="left:365.70px;top:605.01px;font-size:22.67px;line-height:22.67px;color:#666666;letter-spacing:0.358px">Organization</div>
<div class="t" style="left:365.70px;top:712.46px;font-size:22.67px;line-height:22.67px;color:#666666;letter-spacing:0.599px">Source classification</div>
<div class="t" style="left:366.70px;top:819.91px;font-size:22.67px;line-height:22.67px;color:#666666;letter-spacing:0.685px">Target classification</div>
<div class="t" style="left:365.70px;top:927.36px;font-size:22.67px;line-height:22.67px;color:#666666;letter-spacing:0.360px">Status</div>
<div class="t" style="left:703.80px;top:160.01px;font-size:22.67px;line-height:22.67px;color:#666666;letter-spacing:-0.137px">Search</div>
<div class="t" style="left:704.80px;top:216.27px;font-size:17.40px;line-height:17.40px;color:#212121;letter-spacing:-0.154px">Search by ID, name or version</div>
<div class="t" style="left:1971.70px;top:159.61px;font-size:22.67px;line-height:22.67px;color:#666666;letter-spacing:0.323px">Creation date</div>
<div class="t" style="left:2388.60px;top:176.00px;font-size:18.67px;line-height:18.67px;color:#ffffff;letter-spacing:-0.265px;font-weight:700">Upload</div>
<div class="t" style="left:693.00px;top:313.86px;font-size:16.00px;line-height:16.00px;color:#1f1f1f;letter-spacing:-0.145px;-webkit-text-stroke:0.45px #1f1f1f">ID</div>
<div class="t" style="left:781.00px;top:313.86px;font-size:16.00px;line-height:16.00px;color:#1f1f1f;letter-spacing:0.673px;-webkit-text-stroke:0.45px #1f1f1f">Name</div>
<div class="t" style="left:1195.70px;top:313.86px;font-size:16.00px;line-height:16.00px;color:#1f1f1f;letter-spacing:0.783px;-webkit-text-stroke:0.45px #1f1f1f">Source classification</div>
<div class="t" style="left:1456.60px;top:313.86px;font-size:16.00px;line-height:16.00px;color:#1f1f1f;letter-spacing:0.854px;-webkit-text-stroke:0.45px #1f1f1f">Target classification</div>
<div class="t" style="left:1692.80px;top:313.86px;font-size:16.00px;line-height:16.00px;color:#1f1f1f;letter-spacing:0.671px;-webkit-text-stroke:0.45px #1f1f1f">Organization</div>
<div class="t" style="left:2044.90px;top:313.86px;font-size:16.00px;line-height:16.00px;color:#1f1f1f;letter-spacing:0.437px;-webkit-text-stroke:0.45px #1f1f1f">Created at</div>
<div class="t" style="left:2256.30px;top:313.86px;font-size:16.00px;line-height:16.00px;color:#1f1f1f;letter-spacing:0.705px;-webkit-text-stroke:0.45px #1f1f1f">Files</div>
<div class="t" style="left:1851.00px;top:1153.86px;font-size:17.30px;line-height:17.30px;color:#212121;letter-spacing:0.234px">Items per page</div>
<div class="t" style="left:2003.00px;top:1153.26px;font-size:17.30px;line-height:17.30px;color:#212121;letter-spacing:-0.411px">20</div>
<div class="t" style="left:2144.80px;top:1151.56px;font-size:17.30px;line-height:17.30px;color:#212121;letter-spacing:0.173px">1 - 20 of 385</div>
</body></html>
